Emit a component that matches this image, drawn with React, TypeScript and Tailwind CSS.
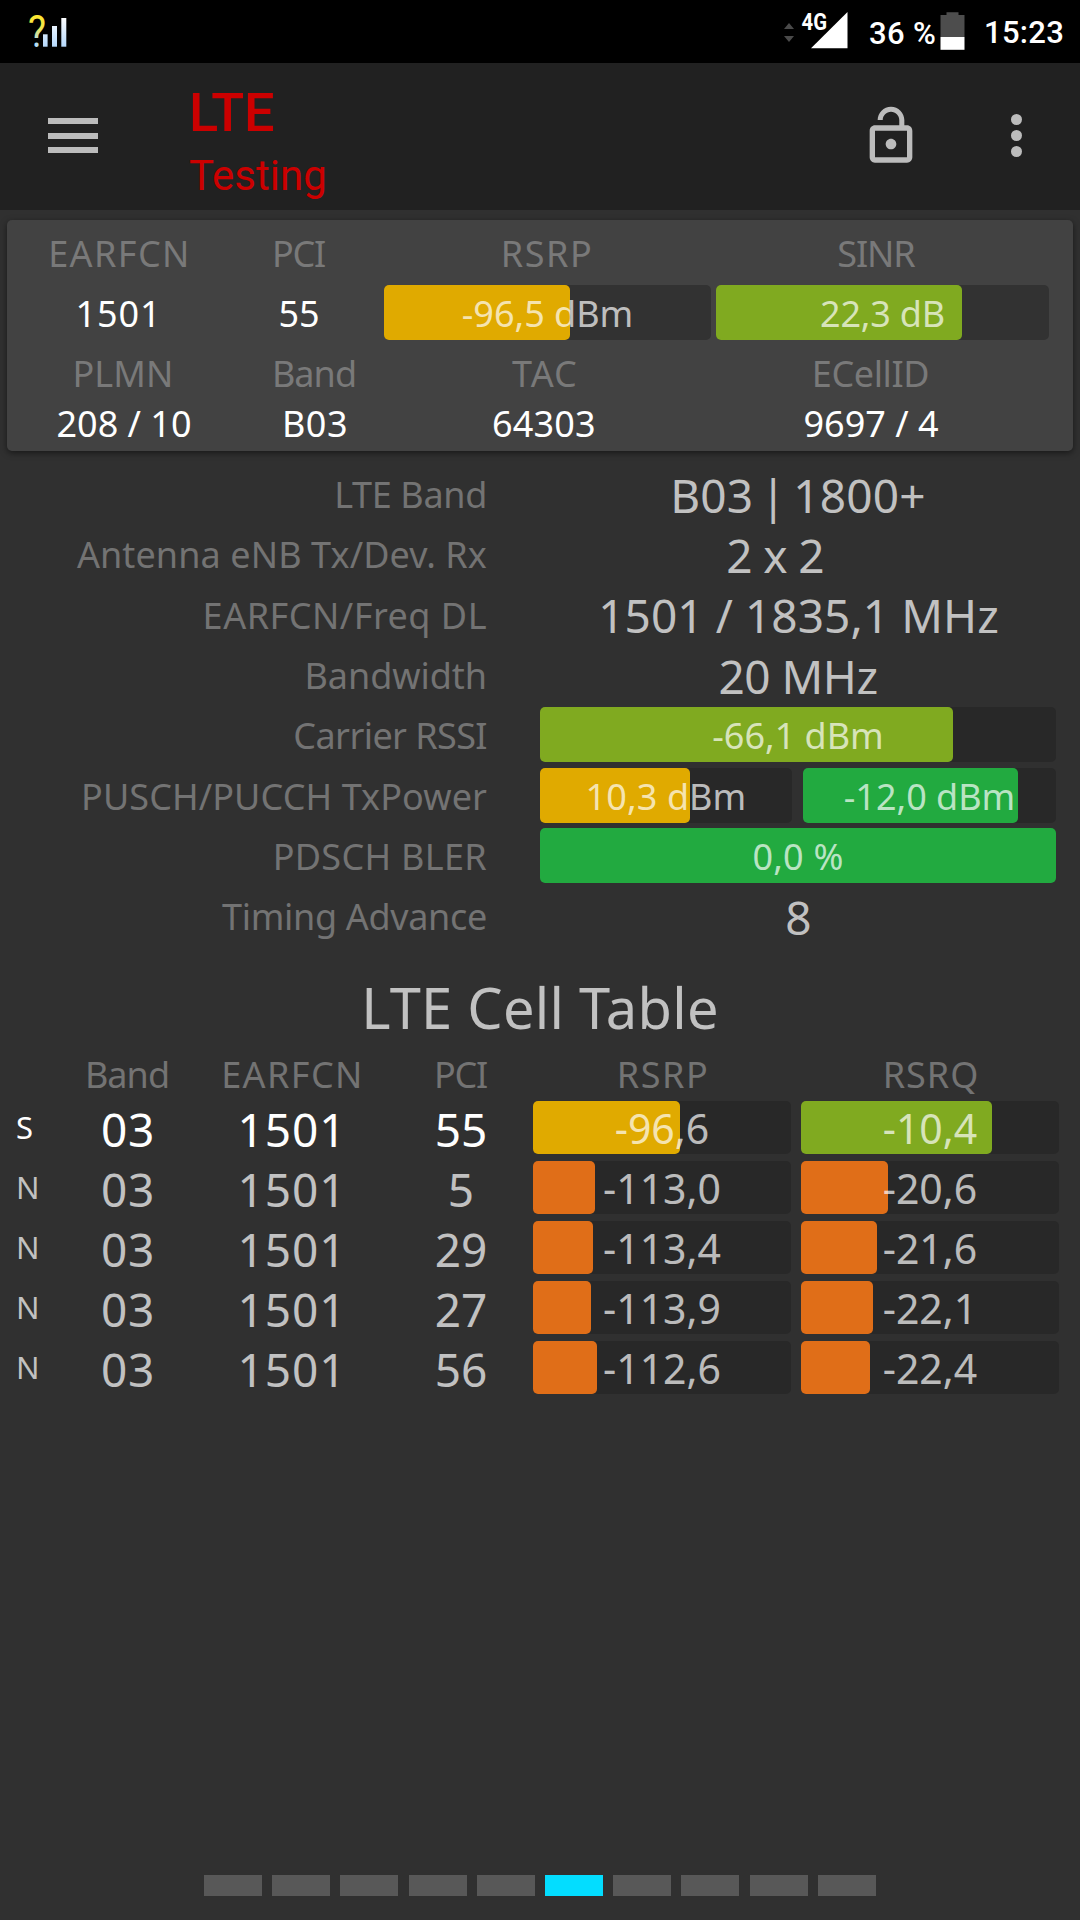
import clsx from 'clsx';

type BarProps = {
  text: string;
  fill: string;
  color: string;
  className?: string;
};

const carrier = [
  { label: 'LTE Band', labelClass: 'tracking-[-0.34px]', value: 'B03 | 1800+', valueClass: '[word-spacing:-5px] tracking-[0.2px]' },
  { label: 'Antenna eNB Tx/Dev. Rx', labelClass: 'tracking-[0.1px]', value: '2 x 2', valueClass: 'tracking-[-0.64px] pr-[46px]' },
  { label: 'EARFCN/Freq DL', labelClass: 'tracking-[0.5px]', value: '1501 / 1835,1 MHz', valueClass: 'tracking-[0.07px] pl-[1px]' },
  { label: 'Bandwidth', labelClass: 'tracking-[-0.05px]', value: '20 MHz', valueClass: 'tracking-[-0.48px]' },
];

const cells = [
  { type: 'S', pci: '55', rsrp: '-96,6', rsrpFill: '57%', rsrq: '-10,4', rsrqFill: '74.2%' },
  { type: 'N', pci: '5', rsrp: '-113,0', rsrpFill: '24.1%', rsrq: '-20,6', rsrqFill: '33.7%' },
  { type: 'N', pci: '29', rsrp: '-113,4', rsrpFill: '23.3%', rsrq: '-21,6', rsrqFill: '29.5%' },
  { type: 'N', pci: '27', rsrp: '-113,9', rsrpFill: '22.3%', rsrq: '-22,1', rsrqFill: '27.8%' },
  { type: 'N', pci: '56', rsrp: '-112,6', rsrpFill: '24.9%', rsrq: '-22,4', rsrqFill: '26.6%' },
];

function Bar({ text, fill, color, className }: BarProps) {
  return (
    <div className={clsx('relative flex items-center justify-center rounded-[5px] text-white/70', className)}>
      <div className={clsx('absolute inset-y-0 left-0 rounded-[5px]', color)} style={{ width: fill }} />
      <span className="relative pt-[3px] leading-none whitespace-pre">{text}</span>
    </div>
  );
}

function StatusBar() {
  return (
    <div className="h-[63px] bg-black text-white flex items-center justify-between pl-[28px] pr-[16px] font-['Roboto',sans-serif]">
      <svg width="40" height="63" viewBox="0 0 40 63">
        <defs>
          <linearGradient id="mark" x1="0" y1="15" x2="0" y2="47" gradientUnits="userSpaceOnUse">
            <stop offset="0" stopColor="#ffe62e" />
            <stop offset="0.4" stopColor="#f2e64c" />
            <stop offset="0.8" stopColor="#b4dcf5" />
          </linearGradient>
          <linearGradient id="bars" x1="0" y1="17" x2="0" y2="47" gradientUnits="userSpaceOnUse">
            <stop offset="0" stopColor="#ffffff" />
            <stop offset="1" stopColor="#b4d8fc" />
          </linearGradient>
        </defs>
        <text x="0" y="46.7" fontSize="44" fontWeight="400" textLength="18" lengthAdjust="spacingAndGlyphs" fill="url(#mark)">?</text>
        <rect x="15" y="34.3" width="4.6" height="12.4" fill="url(#bars)" />
        <rect x="24" y="26" width="5" height="20.7" fill="url(#bars)" />
        <rect x="33.3" y="18" width="5" height="28.7" fill="url(#bars)" />
      </svg>
      <div className="flex items-center text-[31px] font-medium leading-none">
        <svg width="64" height="63" viewBox="0 0 64 63" className="mr-[21px]">
          <path d="M0 29l5-6 5 6zM0 36h10l-5 6z" fill="#4a4a4a" />
          <path d="M27 48.3L63.5 12v36.3z" fill="#fff" />
          <text x="17.5" y="30" fontSize="24" fontWeight="700" textLength="25.5" lengthAdjust="spacingAndGlyphs" fill="#fff">4G</text>
        </svg>
        <span className="pt-[3px] w-[71px] tracking-[0.35px] whitespace-nowrap">36 %</span>
        <svg width="25" height="63" viewBox="0 0 25 63" className="mr-[19px]">
          <path d="M6.5 12.3h12V15H24.5v22H.5V15h6z" fill="#4d4d4d" />
          <rect x="0.5" y="37" width="24" height="12.8" fill="#fff" />
        </svg>
        <span className="pt-[1px] tracking-[0.25px]">15:23</span>
      </div>
    </div>
  );
}

function AppBar() {
  return (
    <div className="h-[147px] bg-[#212121] flex items-center pl-[48px] pr-[58px] font-['Roboto',sans-serif] text-[#cc0000]">
      <div className="flex flex-col gap-[8.5px] mt-[-2px]">
        <div className="w-[50px] h-[6px] bg-[#bcbcbc]" />
        <div className="w-[50px] h-[6px] bg-[#bcbcbc]" />
        <div className="w-[50px] h-[6px] bg-[#bcbcbc]" />
      </div>
      <div className="ml-[91px] flex-1 leading-none pt-[14px]">
        <div className="text-[54px] h-[69px] font-medium tracking-[-0.3px]">LTE</div>
        <div className="text-[42px] h-[47px]">Testing</div>
      </div>
      <svg width="64" height="64" viewBox="0 0 24 24" fill="#bcbcbc" className="mr-[67.5px] mt-[-2px]">
        <path d="M12 17c1.1 0 2-.9 2-2s-.9-2-2-2-2 .9-2 2 .9 2 2 2zm6-9h-1V6c0-2.76-2.24-5-5-5S7 3.24 7 6h1.9c0-1.71 1.39-3.1 3.1-3.1 1.71 0 3.1 1.39 3.1 3.1v2H6c-1.1 0-2 .9-2 2v10c0 1.1.9 2 2 2h12c1.1 0 2-.9 2-2V10c0-1.1-.9-2-2-2zm0 12H6V10h12v10z" />
      </svg>
      <div className="flex flex-col gap-[5px] w-[32px] pl-[21px] mt-[-2px]">
        <div className="size-[11px] rounded-full bg-[#bcbcbc]" />
        <div className="size-[11px] rounded-full bg-[#bcbcbc]" />
        <div className="size-[11px] rounded-full bg-[#bcbcbc]" />
      </div>
    </div>
  );
}

function ServingCard() {
  return (
    <div className="mx-[7px] mt-[10px] h-[231px] bg-[#424242] rounded-[5px] shadow-[0_2px_6px_rgba(0,0,0,0.5)] text-center text-white">
      <div className="grid grid-cols-[222px_142px_350px_312px] h-[65px] pt-[2px] items-center text-[#797979]">
        <span className="tracking-[1.4px] pl-[3px]">EARFCN</span>
        <span className="tracking-[-1.3px] pr-[3px]">PCI</span>
        <span className="tracking-[1.5px] pl-[2px]">RSRP</span>
        <span className="tracking-[-1.1px] pr-[2px]">SINR</span>
      </div>
      <div className="grid grid-cols-[220px_146px_11px_327px_5px_333px] h-[55px] items-center">
        <span className="tracking-[0.9px] pl-[3px] pt-[3px]">1501</span>
        <span className="pr-[2px] pt-[3px]">55</span>
        <span />
        <Bar text="-96,5 dBm" fill="57%" color="bg-[#e0aa00]" className="h-full bg-[#323232]" />
        <span />
        <Bar text="22,3 dB" fill="73.9%" color="bg-[#80aa20]" className="h-full bg-[#323232] tracking-[-0.2px]" />
      </div>
      <div className="grid grid-cols-[234px_148px_310px_344px] h-[66px] pt-[2px] items-center text-[#797979]">
        <span className="tracking-[0.13px] pr-[2px]">PLMN</span>
        <span className="tracking-[-0.95px] pr-[2px]">Band</span>
        <span className="tracking-[1.1px] pl-[2px]">TAC</span>
        <span className="tracking-[-0.39px] pr-[1px]">ECellID</span>
      </div>
      <div className="grid grid-cols-[234px_148px_310px_344px] h-[34px] items-center">
        <span>208 / 10</span>
        <span className="tracking-[0.5px]">B03</span>
        <span className="tracking-[0.16px]">64303</span>
        <span>9697 / 4</span>
      </div>
    </div>
  );
}

function CarrierInfo() {
  const row = 'grid grid-cols-[487px_516px] gap-x-[53px] h-[60.3px] items-center';
  const label = 'pt-[3px] text-right text-[#737373] whitespace-nowrap';
  const value = 'pt-[2px] text-center text-[46px] text-[#c1c1c1] whitespace-nowrap';
  return (
    <div className="mt-[12.5px]">
      {carrier.map((item) => (
        <div key={item.label} className={row}>
          <span className={clsx(label, item.labelClass)}>{item.label}</span>
          <span className={clsx(value, item.valueClass)}>{item.value}</span>
        </div>
      ))}
      <div className={row}>
        <span className={clsx(label, 'tracking-[-0.58px]')}>Carrier RSSI</span>
        <Bar text="-66,1 dBm" fill="80%" color="bg-[#80aa20]" className="h-[55px] bg-[#282828]" />
      </div>
      <div className={row}>
        <span className={clsx(label, 'tracking-[0.09px]')}>PUSCH/PUCCH TxPower</span>
        <div className="grid grid-cols-[252px_253px] gap-x-[11px]">
          <Bar text="10,3 dBm" fill="59.5%" color="bg-[#e0aa00]" className="h-[55px] bg-[#282828] tracking-[0.1px]" />
          <Bar text="-12,0 dBm" fill="85%" color="bg-[#22aa40]" className="h-[55px] bg-[#282828]" />
        </div>
      </div>
      <div className={row}>
        <span className={clsx(label, 'tracking-[0.3px]')}>PDSCH BLER</span>
        <Bar text="0,0 %" fill="100%" color="bg-[#22aa40]" className="h-[55px] bg-[#282828] tracking-[0.2px]" />
      </div>
      <div className={row}>
        <span className={clsx(label, 'tracking-[-0.32px]')}>Timing Advance</span>
        <span className={clsx(value, 'pl-[1px]')}>8</span>
      </div>
    </div>
  );
}

function CellTable() {
  return (
    <div>
      <h2 className="h-[101px] pt-[33px] text-center text-[56px] text-[#c1c1c1] tracking-[0.25px]">LTE Cell Table</h2>
      <div className="grid grid-cols-[66px_124px_202px_140px_258px_258px] h-[54px] pt-[2px] text-center items-center text-[#737373]">
        <span />
        <span className="tracking-[-0.95px] pr-[2px]">Band</span>
        <span className="tracking-[1.4px] pl-[3px]">EARFCN</span>
        <span className="tracking-[-1.3px] pr-[3px]">PCI</span>
        <span className="tracking-[1.5px] pl-[4px]">RSRP</span>
        <span className="tracking-[1px] pl-[24px]">RSRQ</span>
      </div>
      <div className="flex flex-col gap-[7px]">
        {cells.map((cell) => {
          const serving = cell.type === 'S';
          return (
            <div
              key={cell.pci}
              className={clsx(
                'grid grid-cols-[66px_122px_202px_143px_258px_258px] text-center items-center h-[53px]',
                serving ? 'text-white' : 'text-[#c1c1c1]'
              )}
            >
              <span className="text-[31px] text-left pl-[16px]">{cell.type}</span>
              <span className="text-[46px] pt-[4px] pl-[2px] tracking-[0.69px]">03</span>
              <span className="text-[46px] pt-[4px] pl-[6px] tracking-[0.92px]">1501</span>
              <span className="text-[46px] pt-[4px] pr-[1px]">{cell.pci}</span>
              <Bar
                text={cell.rsrp}
                fill={cell.rsrpFill}
                color={serving ? 'bg-[#e0aa00]' : 'bg-[#e06e18]'}
                className="h-full bg-[#282828] text-[41px]"
              />
              <Bar
                text={cell.rsrq}
                fill={cell.rsrqFill}
                color={serving ? 'bg-[#80aa20]' : 'bg-[#e06e18]'}
                className="h-full bg-[#282828] text-[41px] ml-[10px] mr-[-10px]"
              />
            </div>
          );
        })}
      </div>
    </div>
  );
}

export default function App() {
  return (
    <div className="w-[1080px] h-[1920px] bg-[#303030] flex flex-col overflow-hidden font-['Noto_Sans',sans-serif]">
      <StatusBar />
      <AppBar />
      <div className="flex-1 text-[36px] leading-none">
        <ServingCard />
        <CarrierInfo />
        <CellTable />
      </div>

      {/* Page indicator */}
      <div className="flex gap-[10.2px] pl-[204px] pb-[24px]">
        {Array.from({ length: 10 }, (_, i) => (
          <div key={i} className={clsx('w-[58px] h-[21px]', i === 5 ? 'bg-[#03ddff]' : 'bg-[#585858]')} />
        ))}
      </div>
    </div>
  );
}
